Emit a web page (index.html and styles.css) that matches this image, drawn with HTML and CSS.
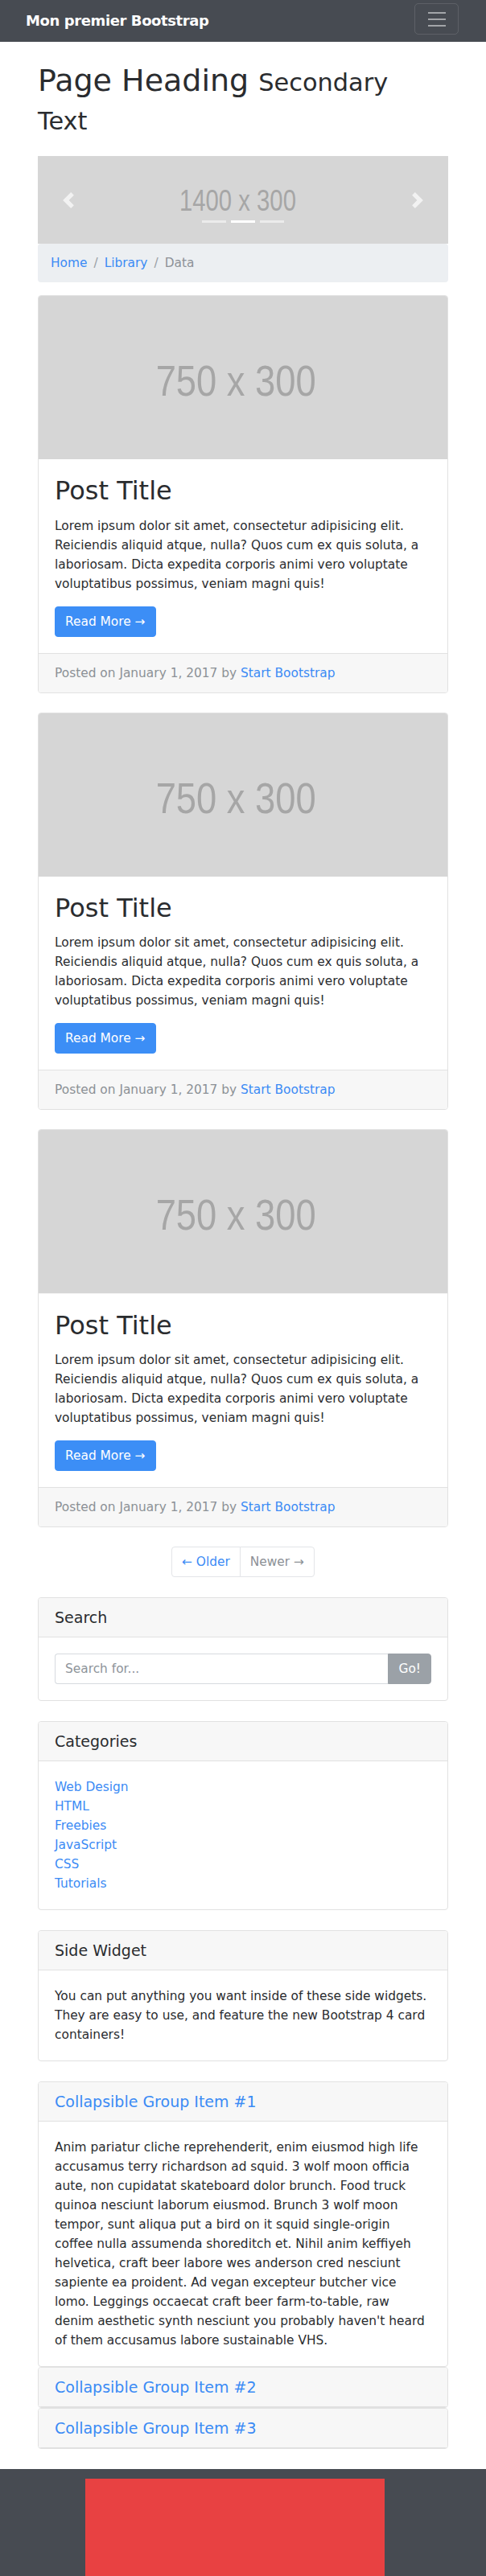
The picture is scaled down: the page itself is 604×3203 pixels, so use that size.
FILE: index.html
```html
<!DOCTYPE html>
<html lang="fr">
<head>
<meta charset="utf-8">
<title>Mon premier Bootstrap</title>
<link rel="stylesheet" href="styles.css">
</head>
<body>
<nav class="navbar">
  <div class="navbar-inner">
    <a class="brand" href="#">Mon premier Bootstrap</a>
    <button class="toggler" type="button" aria-label="Toggle navigation">
      <svg class="toggler-icon" viewBox="0 0 30 30" width="30" height="30"><path d="M4 7h22M4 15h22M4 23h22" stroke="rgba(255,255,255,0.5)" stroke-width="2" fill="none"/></svg>
    </button>
  </div>
</nav>

<main class="container">
  <h1 class="page-heading">Page Heading <small>Secondary</small> <small>Text</small></h1>

  <div class="carousel">
    <svg class="ph" viewBox="0 0 1400 300"><rect width="1400" height="300" class="ph-bg"/><text x="483" y="187" font-size="100" textLength="398" lengthAdjust="spacingAndGlyphs" class="ph-text">1400 x 300</text></svg>
    <ol class="indicators"><li></li><li class="active"></li><li></li></ol>
    <a class="ctrl prev" href="#"><svg viewBox="0 0 8 8" width="20" height="20"><path d="M5.25 0l-4 4 4 4 1.5-1.5-2.5-2.5 2.5-2.5-1.5-1.5z" fill="#fff"/></svg></a>
    <a class="ctrl next" href="#"><svg viewBox="0 0 8 8" width="20" height="20"><path d="M2.75 0l-1.5 1.5 2.5 2.5-2.5 2.5 1.5 1.5 4-4-4-4z" fill="#fff"/></svg></a>
  </div>

  <ol class="breadcrumb">
    <li><a href="#">Home</a></li>
    <li><a href="#">Library</a></li>
    <li class="active">Data</li>
  </ol>

  <article class="card">
    <svg class="ph" viewBox="0 0 750 300"><rect width="750" height="300" class="ph-bg"/><text x="215" y="183" font-size="80" textLength="294" lengthAdjust="spacingAndGlyphs" class="ph-text">750 x 300</text></svg>
    <div class="card-body">
      <h2 class="card-title">Post Title</h2>
      <p class="card-text">Lorem ipsum dolor sit amet, consectetur adipisicing elit. Reiciendis aliquid atque, nulla? Quos cum ex quis soluta, a laboriosam. Dicta expedita corporis animi vero voluptate voluptatibus possimus, veniam magni quis!</p>
      <a href="#" class="btn">Read More &rarr;</a>
    </div>
    <div class="card-footer">Posted on January 1, 2017 by <a href="#">Start Bootstrap</a></div>
  </article>

  <article class="card">
    <svg class="ph" viewBox="0 0 750 300"><rect width="750" height="300" class="ph-bg"/><text x="215" y="183" font-size="80" textLength="294" lengthAdjust="spacingAndGlyphs" class="ph-text">750 x 300</text></svg>
    <div class="card-body">
      <h2 class="card-title">Post Title</h2>
      <p class="card-text">Lorem ipsum dolor sit amet, consectetur adipisicing elit. Reiciendis aliquid atque, nulla? Quos cum ex quis soluta, a laboriosam. Dicta expedita corporis animi vero voluptate voluptatibus possimus, veniam magni quis!</p>
      <a href="#" class="btn">Read More &rarr;</a>
    </div>
    <div class="card-footer">Posted on January 1, 2017 by <a href="#">Start Bootstrap</a></div>
  </article>

  <article class="card">
    <svg class="ph" viewBox="0 0 750 300"><rect width="750" height="300" class="ph-bg"/><text x="215" y="183" font-size="80" textLength="294" lengthAdjust="spacingAndGlyphs" class="ph-text">750 x 300</text></svg>
    <div class="card-body">
      <h2 class="card-title">Post Title</h2>
      <p class="card-text">Lorem ipsum dolor sit amet, consectetur adipisicing elit. Reiciendis aliquid atque, nulla? Quos cum ex quis soluta, a laboriosam. Dicta expedita corporis animi vero voluptate voluptatibus possimus, veniam magni quis!</p>
      <a href="#" class="btn">Read More &rarr;</a>
    </div>
    <div class="card-footer">Posted on January 1, 2017 by <a href="#">Start Bootstrap</a></div>
  </article>

  <ul class="pagination">
    <li><a class="page-link" href="#">&larr; Older</a></li>
    <li><span class="page-link disabled">Newer &rarr;</span></li>
  </ul>

  <aside class="sidebar">
    <section class="card">
      <div class="card-header"><h5>Search</h5></div>
      <div class="card-body">
        <div class="input-group">
          <input type="text" class="form-control" placeholder="Search for...">
          <button class="btn-go" type="button">Go!</button>
        </div>
      </div>
    </section>

    <section class="card">
      <div class="card-header"><h5>Categories</h5></div>
      <div class="card-body">
        <ul class="cat-list">
          <li><a href="#">Web Design</a></li>
          <li><a href="#">HTML</a></li>
          <li><a href="#">Freebies</a></li>
          <li><a href="#">JavaScript</a></li>
          <li><a href="#">CSS</a></li>
          <li><a href="#">Tutorials</a></li>
        </ul>
      </div>
    </section>

    <section class="card">
      <div class="card-header"><h5>Side Widget</h5></div>
      <div class="card-body">You can put anything you want inside of these side widgets. They are easy to use, and feature the new Bootstrap 4 card containers!</div>
    </section>

    <div class="accordion">
      <div class="card">
        <div class="card-header"><h5><a href="#">Collapsible Group Item #1</a></h5></div>
        <div class="card-body">Anim pariatur cliche reprehenderit, enim eiusmod high life accusamus terry richardson ad squid. 3 wolf moon officia aute, non cupidatat skateboard dolor brunch. Food truck quinoa nesciunt laborum eiusmod. Brunch 3 wolf moon tempor, sunt aliqua put a bird on it squid single-origin coffee nulla assumenda shoreditch et. Nihil anim keffiyeh helvetica, craft beer labore wes anderson cred nesciunt sapiente ea proident. Ad vegan excepteur butcher vice lomo. Leggings occaecat craft beer farm-to-table, raw denim aesthetic synth nesciunt you probably haven't heard of them accusamus labore sustainable VHS.</div>
      </div>
      <div class="card">
        <div class="card-header"><h5><a href="#">Collapsible Group Item #2</a></h5></div>
      </div>
      <div class="card">
        <div class="card-header"><h5><a href="#">Collapsible Group Item #3</a></h5></div>
      </div>
    </div>
  </aside>
</main>

<footer class="footer">
  <div class="footer-block"></div>
</footer>
</body>
</html>
```
FILE: styles.css
```css
* { box-sizing: border-box; }

html, body { margin: 0; padding: 0; }

body {
  font-family: "DejaVu Sans", "Noto Sans", sans-serif;
  font-size: 15.4px;
  line-height: 24px;
  color: #2a2c2f;
  background: #fff;
}

a { color: #3b8bf5; text-decoration: none; }

/* Navbar */
.navbar { background: #474b52; height: 52px; }
.navbar-inner {
  display: flex;
  justify-content: space-between;
  align-items: flex-start;
  padding: 4px 34px 0 32px;
}
.brand {
  color: #fff;
  font-weight: 700;
  font-size: 18px;
  letter-spacing: -0.4px;
  line-height: 30px;
  margin-top: 7px;
}
.toggler {
  width: 55px;
  height: 39px;
  padding: 0;
  background: transparent;
  border: 1px solid rgba(255,255,255,0.12);
  border-radius: 5px;
  display: flex;
  align-items: center;
  justify-content: center;
}
.toggler-icon { display: block; }

/* Layout */
.container { width: 510px; margin: 0 auto; }

.page-heading {
  font-size: 38px;
  font-weight: 400;
  line-height: 48px;
  margin: 24px 0 22px;
  padding-right: 40px;
}
.page-heading small { font-size: 80%; font-weight: 400; line-height: 1.2; }

/* Placeholder images */
.ph { display: block; width: 100%; height: auto; }
.ph-bg { fill: #d6d6d6; }
.ph-text { font-family: "Liberation Sans", Arial, sans-serif; fill: #a6a6a6; }

/* Carousel */
.carousel { position: relative; }
.indicators {
  position: absolute;
  left: 0; right: 0; bottom: 26px;
  display: flex;
  justify-content: center;
  margin: 0;
  padding: 0;
  list-style: none;
}
.indicators li {
  width: 30px;
  height: 3px;
  margin: 0 3px;
  background: rgba(255,255,255,0.5);
}
.indicators li.active { background: #fff; }
.ctrl {
  position: absolute;
  top: 0; bottom: 0;
  width: 15%;
  display: flex;
  align-items: center;
  justify-content: center;
  opacity: 0.7;
}
.ctrl svg { display: block; }
.ctrl.prev { left: 0; }
.ctrl.next { right: 0; }

/* Breadcrumb */
.breadcrumb {
  display: flex;
  list-style: none;
  margin: 0 0 16px;
  padding: 12px 16px;
  background: #eceff2;
  border-radius: 4px;
}
.breadcrumb li + li::before {
  content: "/";
  padding: 0 8px;
  color: #9a9fa5;
}
.breadcrumb .active { color: #8d9298; }

/* Cards */
.card {
  border: 1px solid #e1e1e1;
  border-radius: 4px;
  overflow: hidden;
  margin-bottom: 24px;
  background: #fff;
}
.card-body { padding: 20px; }
.card-title {
  font-size: 32px;
  font-weight: 400;
  line-height: 38.4px;
  margin: 0 0 12px;
}
.card-text { margin: 0 0 16px; }
.btn {
  display: inline-block;
  background: #3c8ef6;
  border: 1px solid #3c8ef6;
  color: #fff;
  padding: 6px 12px;
  line-height: 24px;
  border-radius: 4px;
}
.card-footer {
  padding: 12px 20px;
  background: #f7f7f7;
  border-top: 1px solid #e1e1e1;
  color: #8c9196;
}
.card-header {
  padding: 12px 20px;
  background: #f7f7f7;
  border-bottom: 1px solid #e1e1e1;
}
.card-header h5 {
  margin: 0;
  font-size: 19px;
  font-weight: 400;
  line-height: 24px;
}

/* Pagination */
.pagination {
  display: flex;
  justify-content: center;
  list-style: none;
  margin: 0 0 25px;
  padding: 0;
}
.page-link {
  display: block;
  padding: 8px 12px;
  line-height: 20px;
  border: 1px solid #e3e5e8;
  background: #fff;
}
.pagination li:first-child .page-link { border-radius: 4px 0 0 4px; }
.pagination li + li .page-link { margin-left: -1px; border-radius: 0 4px 4px 0; }
.page-link.disabled { color: #8c9196; }

/* Sidebar */
.sidebar .card { margin-bottom: 25px; }
.input-group { display: flex; }
.form-control {
  flex: 1;
  min-width: 0;
  height: 38px;
  padding: 6px 12px;
  font: inherit;
  color: #2a2c2f;
  border: 1px solid #d6dadf;
  border-right: 0;
  border-radius: 4px 0 0 4px;
}
.form-control::placeholder { color: #8e949a; }
.btn-go {
  height: 38px;
  padding: 6px 12px;
  font: inherit;
  color: #fff;
  background: #9ba1a7;
  border: 1px solid #9ba1a7;
  border-radius: 0 4px 4px 0;
}
.cat-list { list-style: none; margin: 0; padding: 0; }

.accordion { margin-bottom: 25px; }
.sidebar .accordion .card { margin-bottom: 0; }

/* Footer */
.footer {
  background: #474b52;
  padding-top: 12px;
}
.footer-block {
  width: 372px;
  height: 140px;
  margin-left: 106px;
  background: #e84142;
}
```
